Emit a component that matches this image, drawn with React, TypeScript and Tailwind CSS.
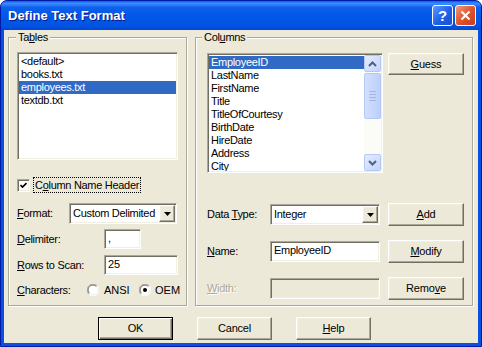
import React from "react";

// classic 3D edges
const sunken =
  "border border-t-[#ACA899] border-l-[#ACA899] border-b-white border-r-white shadow-[inset_1px_1px_0_#716F64,inset_-1px_-1px_0_#F1EFE2]";
const raised =
  "border border-t-white border-l-white border-b-[#716F64] border-r-[#716F64] shadow-[inset_-1px_-1px_0_#ACA899,inset_1px_1px_0_#F1EFE2]";

const U = ({ children }: { children: React.ReactNode }) => (
  <span className="underline decoration-1 underline-offset-[1px]">{children}</span>
);

const Btn = ({ children, def, w = "w-[76px]", h = "h-[23px]" }: { children: React.ReactNode; def?: boolean; w?: string; h?: string }) => (
  <div
    className={`flex items-center justify-center bg-[#ECE9D8] ${w} ${h} ${
      def
        ? "border border-black shadow-[inset_1px_1px_0_white,inset_-1px_-1px_0_#716F64,inset_-2px_-2px_0_#ACA899]"
        : raised
    }`}
  >
    <span className="tracking-[-0.2px]">{children}</span>
  </div>
);

const Combo = ({ value, w }: { value: string; w: string }) => (
  <div className={`flex h-[21px] ${w} bg-white p-[1px] ${sunken}`}>
    <div className="flex-1 pl-[2px] leading-[17px] tracking-[-0.3px]">{value}</div>
    <div className={`flex w-[16px] items-center justify-center bg-[#ECE9D8] ${raised}`}>
      <svg width="7" height="4" viewBox="0 0 7 4">
        <path d="M0 0h7L3.5 4z" fill="black" />
      </svg>
    </div>
  </div>
);

const Radio = ({ checked }: { checked?: boolean }) => (
  <svg width="12" height="12" viewBox="0 0 12 12">
    <circle cx="6" cy="6" r="5.5" fill="white" />
    <path d="M10.2 1.8A5.5 5.5 0 0 0 1.8 10.2" stroke="#ACA899" fill="none" />
    <path d="M9.5 2.5A4.5 4.5 0 0 0 2.5 9.5" stroke="#716F64" fill="none" />
    <path d="M1.8 10.2A5.5 5.5 0 0 0 10.2 1.8" stroke="#FFFFFF" fill="none" />
    <path d="M2.5 9.5A4.5 4.5 0 0 0 9.5 2.5" stroke="#F1EFE2" fill="none" />
    {checked && <circle cx="6" cy="6" r="2" fill="black" />}
  </svg>
);

const Chevron = ({ up }: { up?: boolean }) => (
  <svg width="9" height="6" viewBox="0 0 9 6">
    <path d={up ? "M1 5L4.5 1.5L8 5" : "M1 1L4.5 4.5L8 1"} stroke="#4D6185" strokeWidth="2" fill="none" />
  </svg>
);

const tables = ["<default>", "books.txt", "employees.txt", "textdb.txt"];
const columns = ["EmployeeID", "LastName", "FirstName", "Title", "TitleOfCourtesy", "BirthDate", "HireDate", "Address", "City"];

export default function App() {
  return (
    <div className="h-[347px] w-[482px] bg-white font-['Liberation_Sans',Arial,sans-serif] text-[11px] text-black">
      <div className="flex h-full flex-col overflow-hidden rounded-t-[7px] border border-[#0019A8] bg-[#0A50E0]">
        {/* title bar */}
        <div className="flex h-[29px] items-center bg-[linear-gradient(to_bottom,#0A5FF0_0%,#3D8EFF_9%,#0E5FEC_22%,#0057E6_55%,#0054E3_85%,#0046D0_100%)] pl-[7px] pr-[5px]">
          <span className="text-[13px] font-bold text-white [text-shadow:1px_1px_0_#0A1883]">Define Text Format</span>
          <div className="ml-auto flex gap-[2px]">
            <div className="flex h-[21px] w-[21px] items-center justify-center rounded-[3px] border border-white bg-[linear-gradient(to_bottom_right,#5C9BFF,#1E5FE8_55%,#1A4FD0)]">
              <span className="text-[15px] font-bold leading-none text-white">?</span>
            </div>
            <div className="flex h-[21px] w-[21px] items-center justify-center rounded-[3px] border border-white bg-[linear-gradient(to_bottom_right,#EE9C7E,#E0552E_50%,#C43C18)]">
              <svg width="11" height="11" viewBox="0 0 11 11">
                <path d="M1.5 1.5L9.5 9.5M9.5 1.5L1.5 9.5" stroke="white" strokeWidth="2.2" />
              </svg>
            </div>
          </div>
        </div>

        {/* client */}
        <div className="mx-[3px] mb-[3px] flex flex-1 flex-col bg-[#ECE9D8] pl-[4px] pr-[5px] pt-[1px]">
          <div className="flex gap-[8px]">
            {/* Tables */}
            <fieldset className="h-[275px] w-[179px] border border-[#ACA899] shadow-[inset_1px_1px_0_white,1px_1px_0_white]">
              <legend className="ml-[7px] bg-[#ECE9D8] px-[2px] leading-[13px] tracking-[-0.3px]">
                Ta<U>b</U>les
              </legend>
              <div className="flex flex-col pl-[8px] pt-[8px]">
                <div className={`h-[108px] w-[161px] bg-white p-[1px] ${sunken}`}>
                  <div className="pt-[1px]">
                    {tables.map((t) => (
                      <div
                        key={t}
                        className={`h-[13px] pl-[2px] leading-[13px] tracking-[-0.3px] ${
                          t === "employees.txt" ? "bg-[#316AC5] text-white" : ""
                        }`}
                      >
                        {t}
                      </div>
                    ))}
                  </div>
                </div>

                <div className="mt-[17px] flex h-[16px] items-center">
                  <div className={`flex h-[13px] w-[13px] items-center justify-center bg-white ${sunken}`}>
                    <svg width="7" height="7" viewBox="0 0 7 7">
                      <path d="M0.5 3L2.5 5L6.5 1" stroke="black" strokeWidth="1.6" fill="none" />
                    </svg>
                  </div>
                  <div className="ml-[3px] h-[16px] border border-dotted border-black px-[1px] leading-[14px] tracking-[-0.3px]">
                    C<U>o</U>lumn Name Header
                  </div>
                </div>

                <div className="mt-[10px] flex h-[21px] items-center">
                  <span className="w-[52px] tracking-[-0.3px]">
                    <U>F</U>ormat:
                  </span>
                  <Combo value="Custom Delimited" w="w-[108px]" />
                </div>

                <div className="mt-[5px] flex h-[20px] items-center">
                  <span className="w-[87px] tracking-[-0.3px]">
                    <U>D</U>elimiter:
                  </span>
                  <div className={`h-[20px] w-[37px] bg-white pl-[3px] leading-[16px] ${sunken}`}>,</div>
                </div>

                <div className="mt-[6px] flex h-[20px] items-center">
                  <span className="w-[87px] tracking-[-0.3px]">
                    <U>R</U>ows to Scan:
                  </span>
                  <div className={`h-[20px] w-[74px] bg-white pl-[3px] leading-[17px] ${sunken}`}>25</div>
                </div>

                <div className="mt-[7px] flex h-[16px] items-center">
                  <span className="w-[70px] tracking-[-0.3px]">
                    <U>C</U>haracters:
                  </span>
                  <Radio />
                  <span className="ml-[5px] w-[35px]">ANSI</span>
                  <Radio checked />
                  <span className="ml-[4px]">OEM</span>
                </div>
              </div>
            </fieldset>

            {/* Columns */}
            <fieldset className="h-[275px] w-[278px] border border-[#ACA899] shadow-[inset_1px_1px_0_white,1px_1px_0_white]">
              <legend className="ml-[6px] bg-[#ECE9D8] px-[2px] leading-[13px] tracking-[-0.3px]">
                Col<U>u</U>mns
              </legend>
              <div className="flex flex-col pl-[11px] pt-[9px]">
                <div className="flex items-start">
                  <div className={`flex h-[120px] w-[176px] overflow-hidden bg-white p-[1px] ${sunken}`}>
                    <div className="flex-1 overflow-hidden pt-[1px]">
                      {columns.map((c, i) => (
                        <div
                          key={c}
                          className={`h-[13px] pl-[2px] leading-[13px] tracking-[-0.3px] ${
                            i === 0 ? "bg-[#316AC5] text-white" : ""
                          }`}
                        >
                          {c}
                        </div>
                      ))}
                    </div>
                    {/* XP scrollbar */}
                    <div className="flex w-[17px] flex-col bg-[#FBFBF8]">
                      <div className="flex h-[17px] items-center justify-center rounded-[2px] border border-[#B4C8F6] bg-[linear-gradient(to_bottom_right,#E4ECFE,#C3D4FC)]">
                        <Chevron up />
                      </div>
                      <div className="mt-[1px] flex h-[46px] flex-col items-center justify-center gap-[2px] rounded-[2px] border border-[#B4C8F6] bg-[linear-gradient(to_right,#D3E0FD,#BCCFFB)]">
                        <div className="h-[1px] w-[7px] bg-[#9FB5EE]" />
                        <div className="h-[1px] w-[7px] bg-[#9FB5EE]" />
                        <div className="h-[1px] w-[7px] bg-[#9FB5EE]" />
                        <div className="h-[1px] w-[7px] bg-[#9FB5EE]" />
                      </div>
                      <div className="flex-1" />
                      <div className="flex h-[17px] items-center justify-center rounded-[2px] border border-[#B4C8F6] bg-[linear-gradient(to_bottom_right,#E4ECFE,#C3D4FC)]">
                        <Chevron />
                      </div>
                    </div>
                  </div>
                  <div className="ml-[5px]">
                    <Btn h="h-[22px]">
                      <U>G</U>uess
                    </Btn>
                  </div>
                </div>

                <div className="mt-[30px] flex h-[23px] items-center">
                  <span className="w-[63px] tracking-[-0.3px]">
                    Data <U>T</U>ype:
                  </span>
                  <Combo value="Integer" w="w-[110px]" />
                  <div className="ml-[8px]">
                    <Btn>
                      <U>A</U>dd
                    </Btn>
                  </div>
                </div>

                <div className="mt-[14px] flex h-[23px] items-center">
                  <span className="w-[63px] tracking-[-0.3px]">
                    <U>N</U>ame:
                  </span>
                  <div className={`h-[21px] w-[110px] bg-white pl-[3px] leading-[17px] tracking-[-0.3px] ${sunken}`}>EmployeeID</div>
                  <div className="ml-[8px]">
                    <Btn>
                      <U>M</U>odify
                    </Btn>
                  </div>
                </div>

                <div className="mt-[14px] flex h-[23px] items-center">
                  <span className="w-[63px] tracking-[-0.3px] text-[#ACA899] [text-shadow:1px_1px_0_#fff]">
                    <U>W</U>idth:
                  </span>
                  <div className={`h-[21px] w-[110px] bg-[#ECE9D8] ${sunken}`} />
                  <div className="ml-[8px]">
                    <Btn>
                      Remo<U>v</U>e
                    </Btn>
                  </div>
                </div>
              </div>
            </fieldset>
          </div>

          <div className="ml-[90px] mt-[11px] flex gap-[24px]">
            <Btn def w="w-[75px]">OK</Btn>
            <Btn w="w-[75px]">Cancel</Btn>
            <Btn w="w-[75px]">
              <U>H</U>elp
            </Btn>
          </div>
        </div>
      </div>
    </div>
  );
}
